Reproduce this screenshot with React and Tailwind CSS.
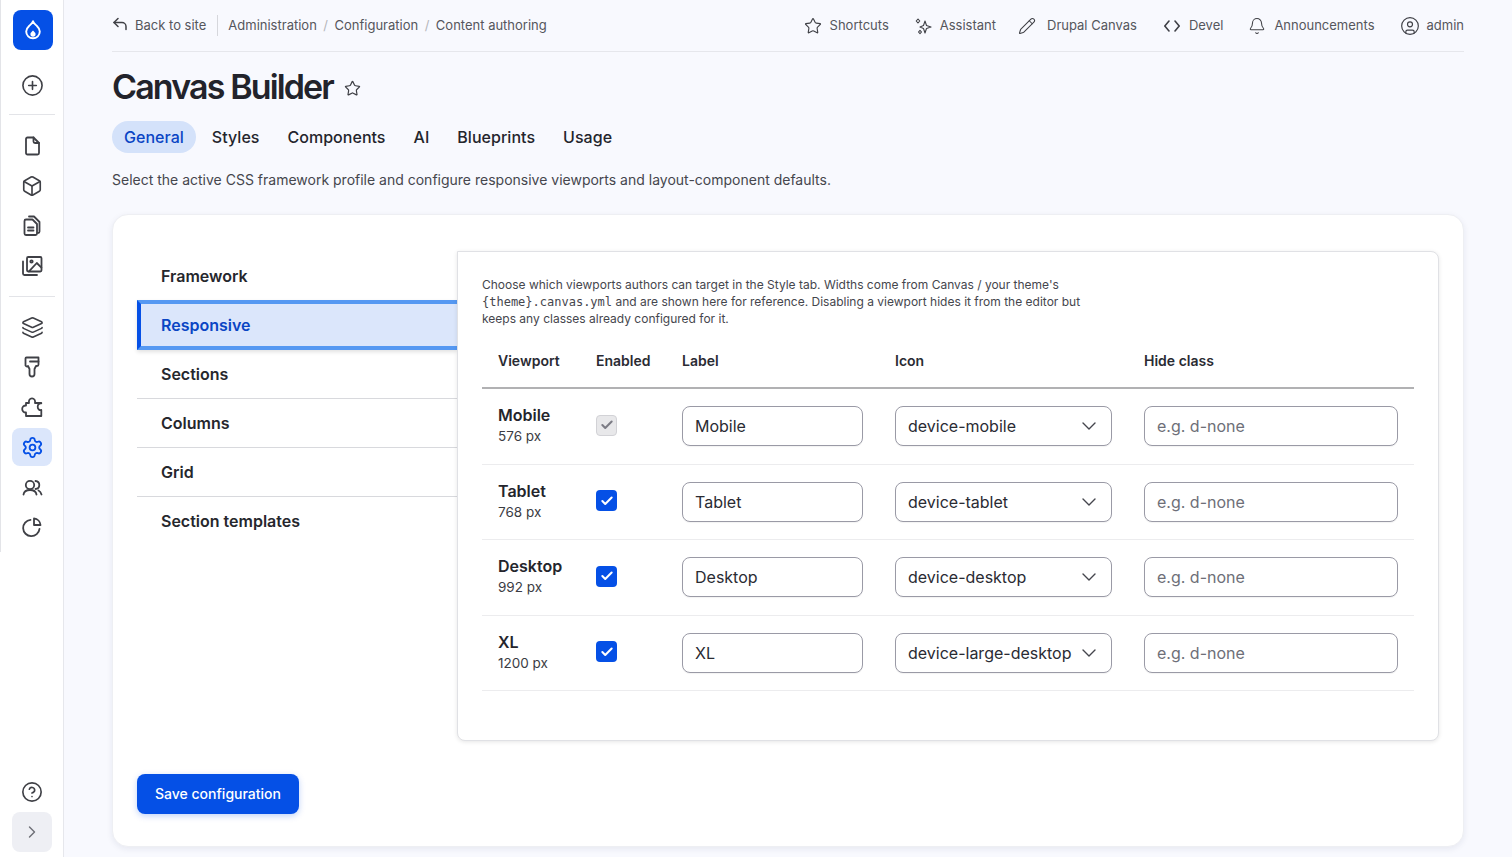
import React from "react";
import { CirclePlus, Box, Layers, Settings, CircleHelp, ChevronRight, ChevronDown, Star, Pencil, Bell, CircleUser, Check } from "lucide-react";

const ink = "#3f4046";

function Drop() {
  return (
    <svg width="20" height="22" viewBox="0 0 20 22" fill="none">
      <path d="M10 2.2c.8 2.2 2.4 3.4 3.9 4.8 1.6 1.5 2.9 3.2 2.9 5.5a6.8 6.8 0 0 1-13.6 0c0-2.3 1.3-4 2.9-5.5C7.6 5.6 9.2 4.4 10 2.2Z" stroke="#fff" strokeWidth="1.9" strokeLinejoin="round" />
      <path d="M10 11.5c.9 1.1 2.6 2.1 2.6 3.6a2.6 2.6 0 0 1-5.2 0c0-1.5 1.700-2.500 2.600-3.600Z" fill="#fff" />
    </svg>
  );
}

function Ico({ children }) {
  return (
    <svg width="22" height="22" viewBox="0 0 22 22" fill="none" stroke={ink} strokeWidth="1.8" strokeLinejoin="round" strokeLinecap="round">
      {children}
    </svg>
  );
}

function FileIcon() {
  return (
    <Ico>
      <path d="M6.500 2.500h6l5.500 5.500v10a1.500 1.500 0 0 1-1.500 1.500h-10A1.500 1.500 0 0 1 5 18V4a1.500 1.500 0 0 1 1.500-1.500Z" />
      <path d="M12.500 2.500v4A1.500 1.500 0 0 0 14 8h4" />
    </Ico>
  );
}

function FilesIcon() {
  return (
    <Ico>
      <path d="M5 4.500h6.500L16 9v9.500a1.500 1.500 0 0 1-1.500 1.500H5a1.500 1.500 0 0 1-1.500-1.500V6A1.500 1.500 0 0 1 5 4.500Z" />
      <path d="M7 12.500h5.500M7 15.500h5.500" />
      <path d="M8 1.500h5l5.500 5.500v9.500a1.500 1.500 0 0 1-1.500 1.500" />
    </Ico>
  );
}

function ImagesIcon() {
  return (
    <Ico>
      <rect x="6" y="2" width="14.500" height="14.500" rx="1.200" />
      <circle cx="10.500" cy="6.500" r="1.200" />
      <path d="M8 16.300 15.800 8l4.600 4.600" />
      <path d="M2 6.500v12a1.500 1.500 0 0 0 1.500 1.500H16" />
    </Ico>
  );
}

function BrushIcon() {
  return (
    <Ico>
      <path d="M5.500 1.500h12V8.500a1.500 1.500 0 0 1-1.500 1.500h-1l-1.500 3v5a2.500 2.500 0 0 1-5 0v-5L7 10A1.500 1.500 0 0 1 4.500 8.500V2.500a1 1 0 0 1 1-1Z" />
      <path d="M17.500 5.500H9" />
    </Ico>
  );
}

function PuzzleIcon() {
  return (
    <Ico>
      <path d="M5 20H20.300V14c-1.800.4-3.600-.8-3.600-3.300s1.800-3.700 3.600-3.300V7H14c.5-2.700-.8-4.700-3-4.700S7.500 4.300 8 7H5V9.500C2.800 9.300 1.200 11 1.200 13S2.800 16.700 5 16.500Z" />
    </Ico>
  );
}

function UsersIcon() {
  return (
    <Ico>
      <circle cx="9" cy="9" r="4.200" />
      <path d="M2.500 18.500c.5-3 3-4.500 6.500-4.500s6 1.500 6.500 4.500" />
      <path d="M14.500 5c2.300.2 3.800 1.800 3.800 4s-1.500 3.800-3.800 4" />
      <path d="M17.500 14.500c1.500.6 2.500 2.200 3 4" />
    </Ico>
  );
}

function PieIcon() {
  return (
    <Ico>
      <path d="M9.500 3.800a8.200 8.200 0 1 0 9 9" />
      <path d="M13 2.500a7 7 0 0 1 6.500 6.500H13Z" />
    </Ico>
  );
}

function SparkIcon() {
  return (
    <svg width="18" height="18" viewBox="0 0 18 18" fill="none" stroke={ink} strokeWidth="1.100" strokeLinejoin="round">
      <path d="M11 4l1.500 4.500L17 10l-4.500 1.500L11 16l-1.500-4.500L6 10l3.500-1.500Z" />
      <path d="M4 2 5.800 4 4 6 2.200 4Z" />
      <path d="M6 13.300 7.500 15 6 16.700 4.500 15Z" />
    </svg>
  );
}

function BackIcon() {
  return (
    <svg width="14" height="14" viewBox="0 0 14 14" fill="none" stroke={ink} strokeWidth="1.500" strokeLinejoin="round" strokeLinecap="round">
      <path d="M5 1.500 1 5.500l4 4" />
      <path d="M1 5.500h8a4 4 0 0 1 4 4v3" />
    </svg>
  );
}

function CodeIcon() {
  return (
    <svg width="16" height="16" viewBox="0 0 16 16" fill="none" stroke={ink} strokeWidth="1.600" strokeLinejoin="round" strokeLinecap="round">
      <path d="M5 3 .8 8 5 13" />
      <path d="M11 3l4.200 5L11 13" />
    </svg>
  );
}

function Rail({ children, active }) {
  return (
    <div className={active ? "w-10 h-[38px] my-px rounded-lg bg-[#dbe6fb] flex items-center justify-center text-[#0550e6]" : "w-10 h-10 flex items-center justify-center text-[#3f4046]"}>
      {children}
    </div>
  );
}

function Sidebar() {
  return (
    <aside className="w-16 h-full shrink-0 bg-white border-r border-[#e6e7ec] flex flex-col justify-between">
      <div className="h-[552px] border-l border-[#e3e4e8] pt-[10px] flex flex-col items-center">
        <div className="ml-[2px] w-10 h-10 rounded-lg bg-[#0550e6] flex items-center justify-center"><Drop /></div>
        <div className="mt-[15px]"><Rail><CirclePlus size={23} strokeWidth={1.7} /></Rail></div>
        <div className="mt-[9px] mb-[11px] h-px w-[46px] bg-[#e3e4e8]" />
        <Rail><FileIcon /></Rail>
        <Rail><Box size={22} strokeWidth={1.8} /></Rail>
        <Rail><FilesIcon /></Rail>
        <Rail><ImagesIcon /></Rail>
        <div className="mt-[10px] mb-[10px] h-px w-[46px] bg-[#e3e4e8]" />
        <Rail><Layers size={23} strokeWidth={1.7} /></Rail>
        <Rail><BrushIcon /></Rail>
        <Rail><PuzzleIcon /></Rail>
        <Rail active><Settings size={23} strokeWidth={1.9} /></Rail>
        <Rail><UsersIcon /></Rail>
        <Rail><PieIcon /></Rail>
      </div>
      <div className="pb-[5px] flex flex-col items-center">
        <Rail><CircleHelp size={22} strokeWidth={1.8} /></Rail>
        <div className="w-10 h-10 rounded-lg bg-[#eeeff4] flex items-center justify-center text-[#6f7078]"><ChevronRight size={20} strokeWidth={1.7} /></div>
      </div>
    </aside>
  );
}

function TopItem({ icon, label, className }) {
  return (
    <div className={`flex items-center ${className}`}>
      {icon}
      <span>{label}</span>
    </div>
  );
}

function TopBar() {
  return (
    <header className="h-[52px] border-b border-[#e6e7ec] flex items-center justify-between text-[13px] text-[#55565c]">
      <div className="flex items-center">
        <span className="ml-[1px] mr-2 -mt-[4px] flex"><BackIcon /></span>
        <span>Back to site</span>
        <span className="ml-[11px] mr-[10px] h-[21px] w-px bg-[#d6d7dc]" />
        <span>Administration</span>
        <span className="mx-[6.5px] text-[#b5b6bb]">/</span>
        <span>Configuration</span>
        <span className="mx-[6.5px] text-[#b5b6bb]">/</span>
        <span>Content authoring</span>
      </div>
      <div className="flex items-center">
        <TopItem className="gap-2" icon={<Star size={18} strokeWidth={1.5} className="text-[#3f4046]" />} label="Shortcuts" />
        <TopItem className="gap-2 ml-[25px]" icon={<SparkIcon />} label="Assistant" />
        <TopItem className="gap-[11px] ml-[22px]" icon={<Pencil size={18} strokeWidth={1.4} className="text-[#3f4046]" />} label="Drupal Canvas" />
        <TopItem className="gap-[9px] ml-[27px]" icon={<CodeIcon />} label="Devel" />
        <TopItem className="gap-2 ml-[25px]" icon={<Bell size={18} strokeWidth={1.4} className="text-[#3f4046]" />} label="Announcements" />
        <TopItem className="gap-[7px] ml-[25px]" icon={<CircleUser size={20} strokeWidth={1.4} className="text-[#3f4046]" />} label="admin" />
      </div>
    </header>
  );
}

function Tabs() {
  const tabs = ["General", "Styles", "Components", "AI", "Blueprints", "Usage"];
  return (
    <nav className="mt-3 flex items-center gap-1 text-base font-medium tracking-[0.002em] text-[#24252c]">
      {tabs.map((t, i) => (
        <span key={t} className={i === 0 ? "h-8 px-3 rounded-full bg-[#d4e2fa] text-[#0a45c4] flex items-center" : "h-8 px-3 flex items-center"}>{t}</span>
      ))}
    </nav>
  );
}

function SideMenu() {
  return (
    <div className="w-[320px] shrink-0 text-base font-semibold text-[#26272d]">
      <div className="h-[49px] pl-6 flex items-center">Framework</div>
      <div className="h-[50px] pl-[20px] flex items-center bg-[#dbe6fb] text-[#0a45c4] border-y-4 border-y-[#5598f2] border-l-4 border-l-[#0550e6] shadow-[0_2px_4px_rgba(0,0,0,0.12)]">Responsive</div>
      <div className="h-[49px] pl-6 flex items-center border-b border-[#d8d9dd]">Sections</div>
      <div className="h-[49px] pl-6 flex items-center border-b border-[#d8d9dd]">Columns</div>
      <div className="h-[49px] pl-6 flex items-center border-b border-[#d8d9dd]">Grid</div>
      <div className="h-[47px] pl-6 flex items-center">Section templates</div>
    </div>
  );
}

const gridCols = "grid grid-cols-[98px_86px_213px_249px_286px]";

function Field({ value, placeholder, w }) {
  return (
    <input
      readOnly
      value={value}
      placeholder={placeholder}
      className={`${w} h-10 rounded-lg border border-[#9a9aa6] bg-white px-3 text-base text-[#2a2b33] placeholder:text-[#6e6f78] outline-none shadow-[0_1px_1px_rgba(0,0,0,0.05)]`}
    />
  );
}

function Row({ name, px, enabled, disabled, icon }) {
  return (
    <div className={`${gridCols} h-[75.5px] items-center border-b border-[#ececee]`}>
      <div className="pl-4 -mt-[2px]">
        <div className="text-base font-semibold leading-[22px] text-[#24252c]">{name}</div>
        <div className="text-[13.5px] leading-[20px] text-[#3b3c43]">{px}</div>
      </div>
      <div className="pl-4 -mt-[2px]">
        {disabled ? (
          <span className="w-[21px] h-[21px] rounded-[4px] bg-[#e8e8ea] border border-[#d2d2d6] flex items-center justify-center text-[#7c7c85]"><Check size={14} strokeWidth={3.5} /></span>
        ) : (
          <span className="w-[21px] h-[21px] rounded-[4px] bg-[#0550e6] flex items-center justify-center text-white"><Check size={14} strokeWidth={3.5} /></span>
        )}
      </div>
      <div className="pl-4"><Field value={enabled} w="w-[181px]" /></div>
      <div className="pl-4">
        <div className="w-[217px] h-10 rounded-lg border border-[#9a9aa6] bg-white pl-3 pr-[10px] flex items-center justify-between text-base text-[#2a2b33] shadow-[0_1px_1px_rgba(0,0,0,0.05)]">
          <span>{icon}</span>
          <ChevronDown size={24} strokeWidth={1.4} className="text-[#45464d]" />
        </div>
      </div>
      <div className="pl-4"><Field value="" placeholder="e.g. d-none" w="w-[254px]" /></div>
    </div>
  );
}

function Panel() {
  const th = "pl-4 text-sm font-semibold text-[#2a2b33]";
  return (
    <section className="relative z-10 flex-1 h-[490px] bg-white border border-[#e0e1e5] rounded-r-lg rounded-bl-lg shadow-[0_1px_4px_rgba(0,0,0,0.1)] px-6 pt-6">
      <p className="max-w-[610px] text-xs leading-[17px] text-[#45464d]">
        Choose which viewports authors can target in the Style tab. Widths come from Canvas / your theme's{" "}
        <code className="font-['DejaVu_Sans_Mono',monospace] text-[12px] leading-none">{"{theme}.canvas.yml"}</code> and are shown here for reference. Disabling a viewport hides it from the editor but keeps any classes already configured for it.
      </p>
      <div className={`${gridCols} mt-2 h-[54px] items-center border-b-2 border-[#b1b1b3]`}>
        <div className={th}>Viewport</div>
        <div className={th}>Enabled</div>
        <div className={th}>Label</div>
        <div className={th}>Icon</div>
        <div className={th}>Hide class</div>
      </div>
      <Row name="Mobile" px="576 px" enabled="Mobile" disabled icon="device-mobile" />
      <Row name="Tablet" px="768 px" enabled="Tablet" icon="device-tablet" />
      <Row name="Desktop" px="992 px" enabled="Desktop" icon="device-desktop" />
      <Row name="XL" px="1200 px" enabled="XL" icon="device-large-desktop" />
    </section>
  );
}

export default function App() {
  return (
    <div className="h-[857px] w-full overflow-hidden flex bg-[#f8f9fe] font-['Inter',sans-serif]">
      <Sidebar />
      <main className="flex-1 px-12 min-w-0">
        <TopBar />
        <div className="mt-[13px] flex items-center gap-[11px]">
          <h1 className="text-[34px] leading-[44px] font-semibold tracking-[-0.055em] text-[#22232b]">Canvas Builder</h1>
          <Star size={17} strokeWidth={1.7} className="text-[#3f4046] mt-[2px]" />
        </div>
        <Tabs />
        <p className="mt-4 text-sm leading-[22px] text-[#45464d]">Select the active CSS framework profile and configure responsive viewports and layout-component defaults.</p>
        <div className="mt-[23px] h-[633px] bg-white rounded-2xl border border-[#eeeff3] shadow-[0_2px_6px_rgba(30,40,90,0.08)] pl-6 pr-6 pt-9">
          <div className="flex items-start">
            <SideMenu />
            <Panel />
          </div>
          <button className="mt-[33px] h-10 w-[162px] rounded-lg bg-[#0550e6] text-sm font-medium text-white shadow-[0_2px_6px_rgba(5,80,230,0.25)]">Save configuration</button>
        </div>
      </main>
    </div>
  );
}
